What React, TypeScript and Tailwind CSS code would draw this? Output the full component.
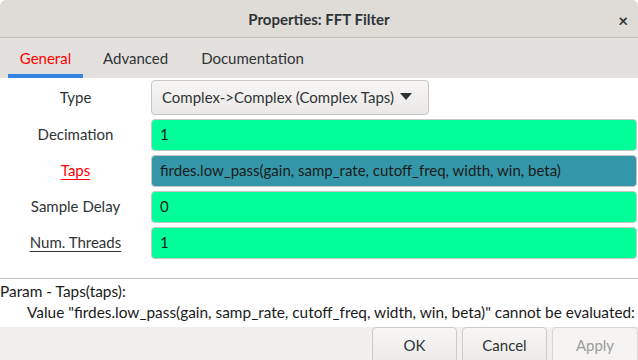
import type { ReactElement } from 'react'

const font = { fontFamily: 'Lato, "Noto Sans", sans-serif' }

type Row = {
  label: string
  value: string
  labelClass?: string
  fieldClass: string
}

const rows: Row[] = [
  { label: 'Decimation', value: '1', fieldClass: 'bg-[#00ff99]' },
  {
    label: 'Taps',
    value: 'firdes.low_pass(gain, samp_rate, cutoff_freq, width, win, beta)',
    labelClass: 'text-[#ff0000] underline underline-offset-[3px]',
    fieldClass: 'bg-[#3497a9]',
  },
  { label: 'Sample Delay', value: '0', fieldClass: 'bg-[#00ff99]' },
  {
    label: 'Num. Threads',
    value: '1',
    labelClass: 'underline underline-offset-[3px]',
    fieldClass: 'bg-[#00ff99]',
  },
]

function Field({ row }: { row: Row }): ReactElement {
  return (
    <div className="flex h-[33px] items-center">
      <div className="flex w-[151px] shrink-0 justify-center">
        <span className={`text-[15px] text-[#2e3436] ${row.labelClass ?? ''}`}>{row.label}</span>
      </div>
      <div
        className={`flex h-[32px] flex-1 items-center rounded-[4px] border border-[#c9c7c4] px-[8px] text-[15px] text-[#1b1b1b] ${row.fieldClass}`}
      >
        {row.value}
      </div>
    </div>
  )
}

export default function App(): ReactElement {
  return (
    <div className="flex h-[360px] w-[638px] flex-col overflow-hidden bg-white" style={font}>
      <div className="relative flex h-[38px] shrink-0 items-center justify-center rounded-t-[6px] border-b border-[#c4c1bd] bg-[#dfdcd8] pt-[2px]">
        <span className="text-[15px] font-bold text-[#2e3436]">Properties: FFT Filter</span>
        <span className="absolute right-[10px] top-[8px] text-[17px] font-bold text-[#2e3436]">×</span>
      </div>

      <div className="flex h-[40px] shrink-0 items-end bg-[#e3e0dd] pl-[8px]">
        <div className="flex h-full w-[75px] flex-col justify-end">
          <span className="pb-[5px] text-center text-[15px] text-[#ff0000]">General</span>
          <div className="h-[4px] bg-[#3584e4]" />
        </div>
        <span className="pb-[9px] pl-[20px] text-[15px] text-[#2e3436]">Advanced</span>
        <span className="pb-[9px] pl-[33px] text-[15px] text-[#2e3436]">Documentation</span>
      </div>

      <div className="flex h-[200px] shrink-0 flex-col gap-[3px] pt-[1px] pr-[1px]">
        <div className="flex h-[36px] items-center">
          <div className="flex w-[151px] shrink-0 justify-center">
            <span className="text-[15px] text-[#2e3436]">Type</span>
          </div>
          <div className="flex h-[35px] w-[278px] items-center gap-[6px] whitespace-nowrap rounded-[4px] border border-[#c9c7c4] bg-gradient-to-b from-[#f7f6f5] to-[#ebe9e7] px-[10px] text-[15px] text-[#2e3436]">
            <span>Complex-&gt;Complex (Complex Taps)</span>
            <svg width="12" height="8" viewBox="0 0 12 8">
              <path d="M0 0 L12 0 L6 7 Z" fill="#2e3436" />
            </svg>
          </div>
        </div>
        {rows.map((row) => (
          <Field key={row.label} row={row} />
        ))}
      </div>

      <div className="flex h-[49px] shrink-0 flex-col whitespace-nowrap border-t border-[#c4c1bd] text-[15.4px] text-[#1b1b1b]">
        <span className="mt-[2px] leading-[20px]">Param - Taps(taps):</span>
        <span className="pl-[27px] leading-[22px]">
          Value "firdes.low_pass(gain, samp_rate, cutoff_freq, width, win, beta)" cannot be evaluated:
        </span>
      </div>

      <div className="flex flex-1 items-start justify-end gap-[5px] bg-[#f1f0ef]">
        <button className="h-[36px] w-[85px] rounded-[4px] border border-[#cdcbc8] bg-gradient-to-b from-[#f7f6f5] to-[#edebe9] text-[15px] text-[#2e3436]">
          OK
        </button>
        <button className="h-[36px] w-[85px] rounded-[4px] border border-[#cdcbc8] bg-gradient-to-b from-[#f7f6f5] to-[#edebe9] text-[15px] text-[#2e3436]">
          Cancel
        </button>
        <button className="h-[36px] w-[86px] rounded-[4px] border border-[#d8d6d3] bg-[#f5f4f3] text-[15px] text-[#9a9c98]">
          Apply
        </button>
      </div>
    </div>
  )
}
